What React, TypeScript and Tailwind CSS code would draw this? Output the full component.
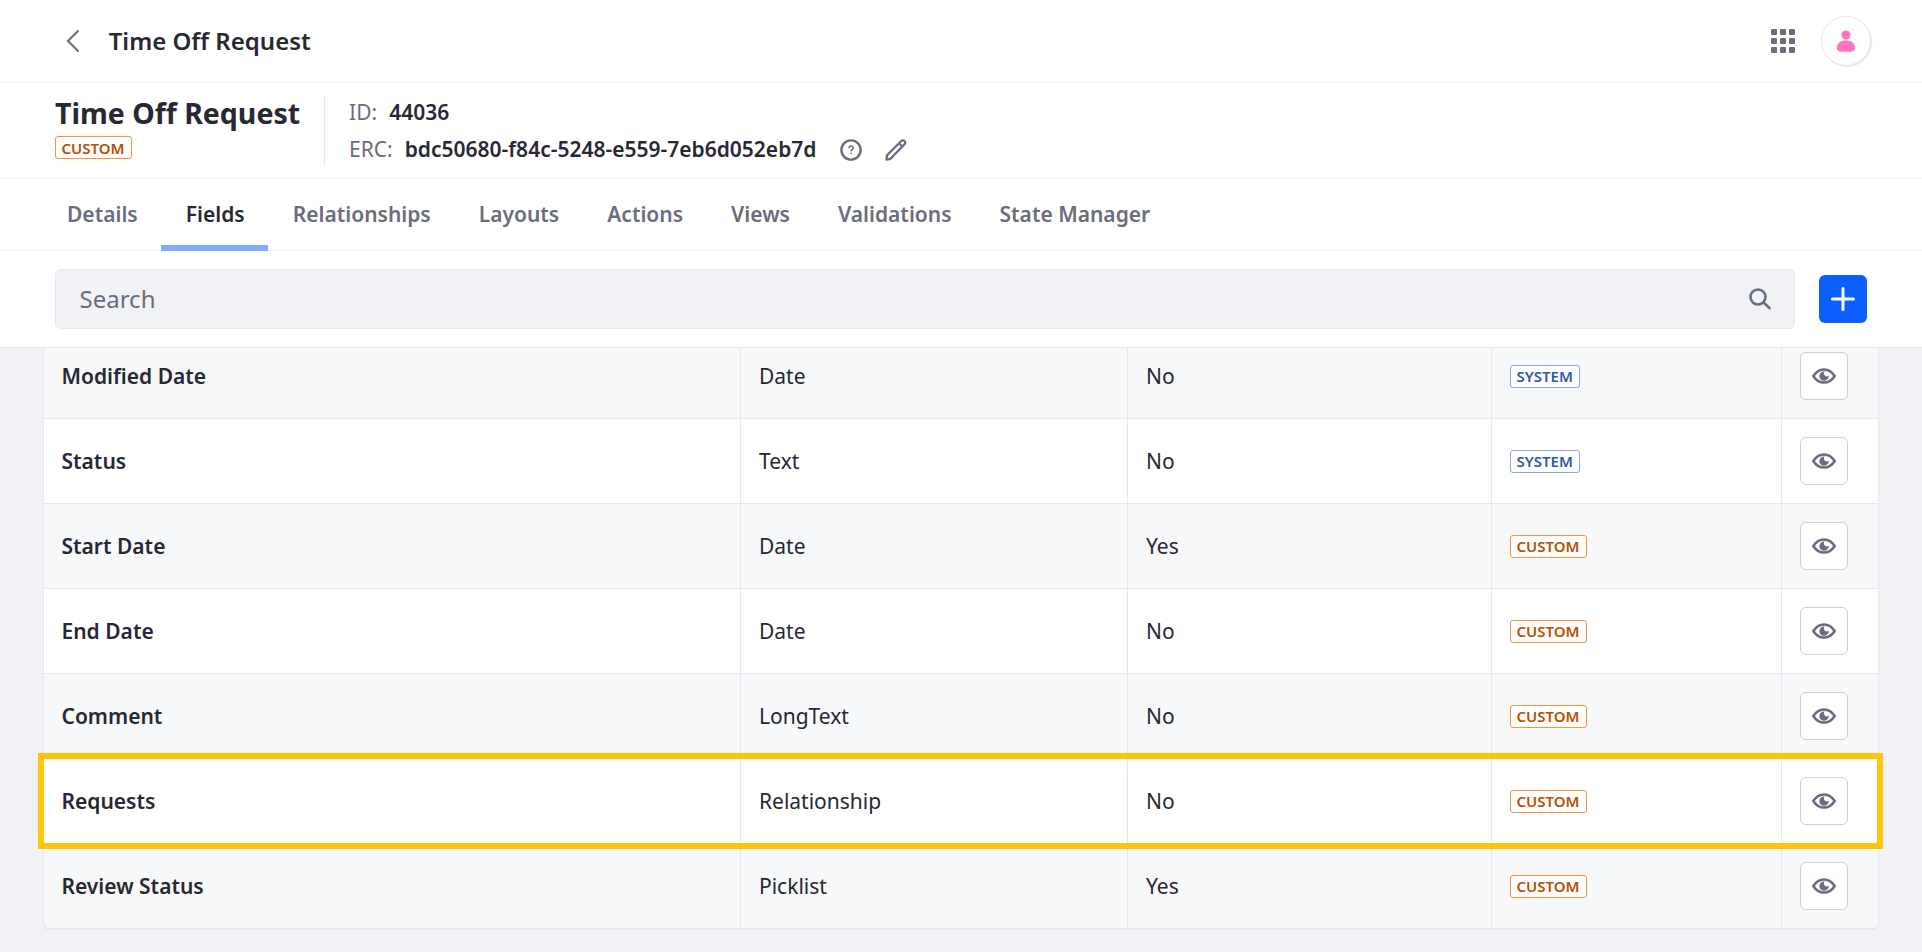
import React from "react";

type Source = "SYSTEM" | "CUSTOM";

const tabs = ["Details", "Fields", "Relationships", "Layouts", "Actions", "Views", "Validations", "State Manager"];

const rows: { label: string; type: string; mandatory: string; source: Source; highlighted?: boolean }[] = [
  { label: "Modified Date", type: "Date", mandatory: "No", source: "SYSTEM" },
  { label: "Status", type: "Text", mandatory: "No", source: "SYSTEM" },
  { label: "Start Date", type: "Date", mandatory: "Yes", source: "CUSTOM" },
  { label: "End Date", type: "Date", mandatory: "No", source: "CUSTOM" },
  { label: "Comment", type: "LongText", mandatory: "No", source: "CUSTOM" },
  { label: "Requests", type: "Relationship", mandatory: "No", source: "CUSTOM", highlighted: true },
  { label: "Review Status", type: "Picklist", mandatory: "Yes", source: "CUSTOM" },
];

function Tag({ kind }: { kind: Source }) {
  const color = kind === "SYSTEM" ? "border-[#89a7e0] text-[#2e5aac]" : "border-[#ff8f39] text-[#b95000]";
  return (
    <span className={`inline-flex h-[23px] items-center rounded-[3px] border bg-white pt-px pr-[6.500px] pl-[5.500px] text-[15px] leading-none font-semibold ${color}`}>
      {kind}
    </span>
  );
}

function EyeIcon() {
  return (
    <svg className="h-6 w-6" viewBox="0 0 24 24" fill="none">
      <path d="M1.300 12C4.200 7.400 7.800 5.400 12 5.400S19.800 7.400 22.700 12C19.800 16.600 16.200 18.600 12 18.600S4.200 16.600 1.300 12Z" stroke="#6b6c7e" strokeWidth="2.500" strokeLinejoin="round" />
      <path d="M12.800 7.500A4.700 4.700 0 1 0 16.700 11.400A2.100 2.100 0 1 1 12.800 7.500Z" fill="#6b6c7e" />
    </svg>
  );
}

export default function App() {
  return (
    <div className="flex h-[952px] w-full flex-col overflow-hidden bg-[#f1f2f5] font-['Noto_Sans',sans-serif] text-[21px] text-[#272833]">
      <header className="flex h-[83px] shrink-0 items-center border-b border-[#f1f2f5] bg-white pr-[51px] pl-[61px]">
        <svg className="h-6 w-6" viewBox="0 0 24 24" fill="none" stroke="#6b6c7e" strokeWidth="2" strokeLinecap="round">
          <path d="M17 2 7 12l10 10" />
        </svg>
        <h1 className="ml-[23.700px] text-2xl font-semibold">Time Off Request</h1>
        <svg className="ml-auto h-6 w-6" viewBox="0 0 24 24" fill="#6b6c7e">
          {[0, 9, 18].map((y) => [0, 9, 18].map((x) => <rect key={`${x}-${y}`} x={x} y={y} width="6" height="6" rx="1" />))}
        </svg>
        <div className="ml-[26px] flex h-[50px] w-[50px] items-center justify-center rounded-full border border-[#e7e7ed] bg-white shadow-[1px_1px_1px_#e7e7ed]">
          <svg className="h-6 w-6" viewBox="0 0 24 24" fill="#ff73c3">
            <circle cx="12" cy="6" r="4.600" />
            <path d="M12 11.500c-5.500 0-9 2.700-9 7.200C3 22.200 5 22.800 12 22.800s9-.6 9-4.100c0-4.500-3.500-7.200-9-7.200Z" />
          </svg>
        </div>
      </header>

      <section className="flex h-24 shrink-0 items-center border-b border-[#f1f2f5] bg-white pl-[55px]">
        <div className="flex h-[69px] flex-col items-start pr-6">
          <h2 className="h-10 text-[28.500px] leading-[34px] font-bold">Time Off Request</h2>
          <Tag kind="CUSTOM" />
        </div>
        <div className="flex h-[69px] flex-col justify-between border-l border-[#e7e7ed] pt-px pl-6">
          <div className="flex h-8 items-center gap-3">
            <span className="text-[#6b6c7e]">ID:</span>
            <span className="font-semibold">44036</span>
          </div>
          <div className="-mb-px flex h-8 items-center">
            <span className="text-[#6b6c7e]">ERC:</span>
            <span className="ml-3 font-semibold">bdc50680-f84c-5248-e559-7eb6d052eb7d</span>
            <svg className="mb-px ml-[23.500px] h-[22px] w-[22px]" viewBox="0 0 22 22" fill="none" stroke="#6b6c7e">
              <circle cx="11" cy="11" r="9.600" strokeWidth="2.400" />
              <path d="M9 9.200c0-1.400.9-2.200 2.100-2.200s2.100.8 2.100 1.900c0 1.500-2.100 1.600-2.100 3.300" strokeWidth="1.500" />
              <circle cx="11.100" cy="14.300" r=".9" fill="#6b6c7e" stroke="none" />
            </svg>
            <svg className="mb-px ml-[23px] h-[22px] w-[22px]" viewBox="0 0 22 22" fill="none" stroke="#6b6c7e" strokeWidth="2.300" strokeLinejoin="round">
              <path d="M1.500 20.500 2 16.300 16.300 2a2.200 2.200 0 0 1 3.200 0 2.200 2.200 0 0 1 0 3.200L5.500 19.800Z" />
              <path d="m14 4.300 3.400 3.400" />
            </svg>
          </div>
        </div>
      </section>

      <nav className="flex h-[72px] shrink-0 border-b border-[#f1f2f5] bg-white pl-[43px]">
        {tabs.map((tab) => (
          <a
            key={tab}
            className={
              tab === "Fields"
                ? "mr-px -mb-px -ml-px flex items-center border-b-[6px] border-[#80acff] pt-[5px] pr-[23px] pl-[25px] font-semibold"
                : "flex items-center px-6 font-semibold text-[#6b6c7e]"
            }
          >
            {tab}
          </a>
        ))}
      </nav>

      <div className="flex h-[97px] shrink-0 items-center gap-6 border-b border-[#e7e7ed] bg-white pr-[55px] pl-[55px]">
        <div className="flex h-[60px] flex-1 items-center justify-between rounded-md border border-[#e7e7ed] bg-[#f1f2f5] pr-[23.500px] pl-[23.500px] text-2xl text-[#6b6c7e]">
          <span>Search</span>
          <svg className="mb-px h-[22px] w-[22px]" viewBox="0 0 22 22" fill="none" stroke="#6b6c7e" strokeLinecap="round">
            <circle cx="9" cy="9" r="7.500" strokeWidth="2.600" />
            <path d="m14.800 14.800 5.700 5.200" strokeWidth="2.600" />
          </svg>
        </div>
        <button className="flex h-12 w-12 items-center justify-center rounded-md bg-[#0b5fff]">
          <svg className="h-6 w-6" viewBox="0 0 24 24" stroke="#fff" strokeWidth="3" strokeLinecap="round">
            <path d="M12 1.500v21M1.500 12h21" />
          </svg>
        </button>
      </div>

      <main className="mr-[43px] ml-[43px] rounded-b-md border border-t-0 border-b-2 border-[#e7e7ed]">
        {rows.map((row, i) => {
          const first = i === 0;
          const last = i === rows.length - 1;
          const textCell = `flex items-center border-r border-[#e7e7ed] ${first ? "pt-[2px] pb-[14px]" : "pt-[2px]"}`;
          return (
            <div
              key={row.label}
              className={`relative grid grid-cols-[697px_387px_364px_290px_1fr] ${first ? "h-[71px]" : last ? "h-[84px] rounded-b-md" : "h-[85px]"} ${i % 2 === 0 ? "bg-[#f7f8f9]" : "bg-white"} ${last ? "" : "border-b border-[#e7e7ed]"}`}
            >
              <div className={`${textCell} pl-[17.500px] font-semibold`}>{row.label}</div>
              <div className={`${textCell} pl-[18px]`}>{row.type}</div>
              <div className={`${textCell} pl-[18px]`}>{row.mandatory}</div>
              <div className={`flex items-center border-r border-[#e7e7ed] pl-[18px] ${first ? "pb-[14px]" : ""}`}>
                <Tag kind={row.source} />
              </div>
              <div className={`flex items-center pl-[18px] ${first ? "pb-[14px]" : ""}`}>
                <button className="flex h-12 w-12 items-center justify-center rounded-md border border-[#cdced9] bg-white">
                  <EyeIcon />
                </button>
              </div>
              {row.highlighted && <div className="absolute -top-[6px] -right-[5px] -bottom-[6px] -left-[6px] z-10 border-[6px] border-[#ffc508]" />}
            </div>
          );
        })}
      </main>
    </div>
  );
}
